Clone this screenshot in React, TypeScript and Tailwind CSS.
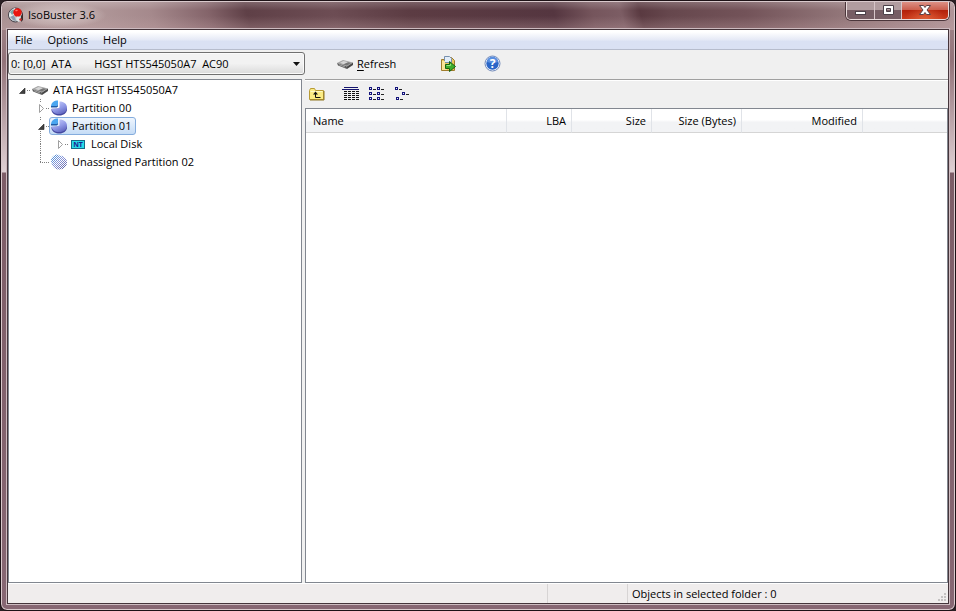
import { useState } from "react";
import type { ReactNode } from "react";

function AppLogo() {
  return (
    <svg width="16" height="16" viewBox="0 0 16 16" aria-hidden="true">
      <circle cx="7.5" cy="8" r="7" fill="#bfc6ca" stroke="#454149" />
      <path d="M7 1C3 2 1 5 1 9l3 4 3-4z" fill="#e8eeee" />
      <path d="M2 5l3-3 2 3-3 3z" fill="#7ea6a9" />
      <path d="M2 10l4-2 2 6-3-1z" fill="#8b9cae" />
      <circle cx="9.5" cy="5.5" r="4.2" fill="#ea150f" />
      <path d="M7 3.500l2-1 1 1-2 1z" fill="#ff796e" />
      <path d="M9 9.500l3 .5 1 4-3 1-2-3z" fill="#e4e8e8" />
      <path d="M13 9l2-3v7l-2 2z" fill="#3b2b2b" />
      <path d="M11 12l2-1 1 2-2 1z" fill="#c92f2b" />
    </svg>
  );
}

function DriveIcon() {
  return (
    <svg width="16" height="16" viewBox="0 0 16 16" aria-hidden="true">
      <path d="M0 7 6 4l10 2.500-6 4z" fill="#a6a6a6" />
      <path d="M3 6.800 6.500 5l5 1.200-4 2.200z" fill="#d6d6d6" />
      <path d="M0 7l10 3.500v2.500L1 9.500z" fill="#5e5e5e" />
      <path d="M10 10.500 16 6.500V9l-6 4z" fill="#484848" />
      <path d="M2 8.700l6 2.300" stroke="#b4b4b4" strokeWidth=".8" />
      <path d="M6 8.600l5-2.400 3 .7-4 2.700z" fill="#777" />
    </svg>
  );
}

function PieIcon() {
  return (
    <svg width="16" height="16" viewBox="0 0 16 16" aria-hidden="true">
      <defs>
        <linearGradient id="pie" x1=".2" y1="0" x2=".8" y2="1">
          <stop offset="0" stopColor="#c9d0fc" />
          <stop offset=".55" stopColor="#8f98e6" />
          <stop offset="1" stopColor="#5a5fba" />
        </linearGradient>
      </defs>
      <path d="M.500 9v1.500c.5 3 4 5 8 5s7-2.500 7.500-5.500V8z" fill="#4448a0" />
      <path d="M8.500 7.500V1.500c4.500 0 7.500 2.500 7.500 6.200s-3 6.300-7.700 6.300S1 12 .500 8.500h6z" fill="url(#pie)" />
      <path d="M0 6C.300 2.500 3 .500 7 .500V5L5.500 6z" fill="#4aa6f0" />
      <path d="M0 6h5.500L7 5v1.500L5.700 7.600H0z" fill="#1f5ca8" />
    </svg>
  );
}

function UnassignedIcon() {
  return (
    <svg width="16" height="16" viewBox="0 0 16 16" aria-hidden="true">
      <defs>
        <linearGradient id="fade" x1="0" y1="0" x2="1" y2="1">
          <stop offset="0" stopColor="#3f8fd8" />
          <stop offset=".5" stopColor="#8d97d8" />
          <stop offset="1" stopColor="#50549a" />
        </linearGradient>
        <pattern id="dither" width="2" height="2" patternUnits="userSpaceOnUse">
          <path d="M0 0h1v1H0zM1 1h1v1H1z" fill="#fff" />
        </pattern>
      </defs>
      <path d="M0 7C0 3 3 .500 7 .500L8.500 1.500C13 1.500 16 4.500 16 8.500s-3 7-7.500 7S1 13 0 7z" fill="url(#fade)" />
      <path d="M0 0h16v16H0z" fill="url(#dither)" />
    </svg>
  );
}

function NtIcon() {
  return (
    <svg width="16" height="16" viewBox="0 0 16 16" aria-hidden="true">
      <rect x="1.500" y="4.500" width="13" height="8" fill="#27dce9" stroke="#176a88" />
      <text x="8" y="11" textAnchor="middle" fontSize="7" fontWeight="700" fill="#1c2290">NT</text>
    </svg>
  );
}

function ExportIcon() {
  return (
    <svg width="16" height="16" viewBox="0 0 16 16" aria-hidden="true">
      <path d="M1.500 3.500h4l1-2h5l3 3v10h-13z" fill="#edc75c" stroke="#a07c2c" />
      <path d="M4.500.500h5l2 2v4h-7z" fill="#e3edf8" stroke="#7790ad" />
      <path d="M2 5h3v4l2 5H2z" fill="#fbe498" />
      <path d="M5.500 8.500h4V5.500l6 5-6 5v-3h-4z" fill="#3fae2c" stroke="#17610f" />
      <path d="M6.500 9.500h4V8" fill="none" stroke="#9ae681" />
    </svg>
  );
}

function HelpIcon() {
  return (
    <svg width="17" height="17" viewBox="0 0 17 17" aria-hidden="true">
      <circle cx="8.500" cy="8.500" r="7.500" fill="#f4f8ff" stroke="#7089b8" />
      <circle cx="8.500" cy="8.500" r="6.200" fill="#2965c7" />
      <path d="M3 7a5.500 5.500 0 0 1 11 0q-5 2-11 0z" fill="#5a8fe0" />
      <text x="8.500" y="13" textAnchor="middle" fontSize="12" fontWeight="700" fill="#fff">?</text>
    </svg>
  );
}

function FolderUpIcon() {
  return (
    <svg width="16" height="14" viewBox="0 0 16 14" aria-hidden="true">
      <path d="M.500 12.500v-9l1-2h4l1 2h8v9z" fill="#fbec84" stroke="#b89a34" />
      <path d="M1.500 4.500h12" stroke="#fffbc8" />
      <path d="M15 4v9H1" fill="none" stroke="#8f7622" />
      <path d="M6.500 5v5.500h5" fill="none" stroke="#111" />
      <path d="M6.500 4.500 4 7.500h5z" fill="#111" />
    </svg>
  );
}

function ReportViewIcon() {
  return (
    <svg width="17" height="15" viewBox="0 0 17 15" shapeRendering="crispEdges" aria-hidden="true">
      <path d="M0 2.500h17M2 .500h14" stroke="#14146e" />
      <path
        d="M2 4.500h15M2 6.500h15M2 8.500h15M2 10.500h15M2 12.500h15"
        stroke="#111"
        strokeDasharray="3 1"
      />
    </svg>
  );
}

function MiniItem({ x, y }: { x: number; y: number }) {
  return (
    <g fill="none">
      <rect x={x + 0.5} y={y + 0.5} width="2" height="2" stroke="#14147c" />
      <path d={`M${x + 4} ${y + 2.5}h3`} stroke="#222" />
    </g>
  );
}

function ListViewIcon() {
  return (
    <svg width="16" height="15" viewBox="0 0 16 15" shapeRendering="crispEdges" aria-hidden="true">
      {[0, 5, 10].map((y) => (
        <g key={y}>
          <MiniItem x={0} y={y} />
          <MiniItem x={8} y={y} />
        </g>
      ))}
    </svg>
  );
}

function SmallViewIcon() {
  return (
    <svg width="16" height="15" viewBox="0 0 16 15" shapeRendering="crispEdges" aria-hidden="true">
      <MiniItem x={0} y={0} />
      <MiniItem x={7} y={5} />
      <MiniItem x={1} y={10} />
    </svg>
  );
}

type Guide = "none" | "through" | "corner" | "open" | "closed" | "root" | "leaf";

function GuideCell({ kind }: { kind: Guide }) {
  const above = kind === "through" || kind === "corner" || kind === "open" || kind === "closed";
  const below = kind === "through" || kind === "open";
  return (
    <svg width="19" height="18" viewBox="0 0 19 18" shapeRendering="crispEdges" className="shrink-0" aria-hidden="true">
      <g stroke="#808080" strokeDasharray="1 1">
        {above && <path d={kind === "closed" || kind === "open" ? "M10.500 0v4" : "M10.500 0v9"} />}
        {below && <path d={kind === "open" ? "M10.500 14v4" : "M10.500 9v9"} />}
        {kind !== "through" && kind !== "none" && (
          <path d={kind === "corner" ? "M10 9.500h9" : "M16 9.500h3"} />
        )}
      </g>
      <g shapeRendering="geometricPrecision">
        {(kind === "open" || kind === "root") && (
          <path d="M14 7v5.500H8.500z" fill="#404040" stroke="#222" strokeWidth=".6" />
        )}
        {(kind === "closed" || kind === "leaf") && (
          <path d="M9.500 5.500v8l4-4z" fill="#fff" stroke="#a0a0a0" />
        )}
      </g>
    </svg>
  );
}

const nodes: { label: string; guides: Guide[]; icon: ReactNode }[] = [
  { label: "ATA HGST HTS545050A7", guides: ["root"], icon: <DriveIcon /> },
  { label: "Partition 00", guides: ["none", "closed"], icon: <PieIcon /> },
  { label: "Partition 01", guides: ["none", "open"], icon: <PieIcon /> },
  { label: "Local Disk", guides: ["none", "through", "leaf"], icon: <NtIcon /> },
  { label: "Unassigned Partition 02", guides: ["none", "corner"], icon: <UnassignedIcon /> },
];

function Tree() {
  const [selected, setSelected] = useState("Partition 01");
  return (
    <ul className="w-[294px] shrink-0 border border-[#828790] bg-white pt-px pl-0.5" aria-label="Devices">
      {nodes.map((node) => (
        <li key={node.label} className="flex h-[18px]">
          {node.guides.map((guide, i) => (
            <GuideCell key={i} kind={guide} />
          ))}
          <button
            onClick={() => setSelected(node.label)}
            className={
              "flex h-[18px] items-center gap-[5px] rounded-[3px] border pr-1 pl-px whitespace-nowrap " +
              (selected === node.label
                ? "border-[#84acdd] bg-linear-to-b from-[#eff6fe] to-[#c5dcf6]"
                : "border-transparent")
            }
          >
            {node.icon}
            <span>{node.label}</span>
          </button>
        </li>
      ))}
    </ul>
  );
}

function TitleBar() {
  return (
    <header className="flex h-[28px] shrink-0 items-start justify-between bg-[linear-gradient(to_bottom,#ffffff30,transparent_30%,transparent_50%,#c5a4a758),linear-gradient(75deg,#a79091_0%,#b29a9b_9%,#a5898c_16%,#84646a_22%,#5f4047_26%,#6d4d54_35%,#5c3c43_43%,#553640_58%,#75555c_62%,#7c5d64_65%,#5a3a41_67%,#66474d_70%,#735359_78%,#927679_88%,#b19699_100%)] pl-1.5">
      <div className="flex h-[26px] items-center gap-1 bg-[radial-gradient(ellipse_at_center,#ded0d0b3_10%,#d2c1c170_50%,transparent_70%)] pr-3">
        <AppLogo />
        <h1>IsoBuster 3.6</h1>
      </div>
      <div className="mr-[5px] flex h-[18px] rounded-b-[5px] border border-t-0 border-[#eadcdc] shadow-[0_0_0_1px_#4b363b]">
        <button aria-label="Minimize" className="flex w-7 items-center justify-center rounded-bl-[4px] border-r border-[#d8c6c9] bg-linear-to-b from-[#b19da0] from-50% to-[#765d64] to-50%">
          <svg width="13" height="13" viewBox="0 0 13 13" aria-hidden="true">
            <rect x="1.500" y="7.500" width="10" height="3" fill="#fff" stroke="#4c4149" />
          </svg>
        </button>
        <button aria-label="Maximize" className="flex w-[27px] items-center justify-center border-r border-[#d8c6c9] bg-linear-to-b from-[#b19da0] from-50% to-[#765d64] to-50%">
          <svg width="13" height="13" viewBox="0 0 13 13" aria-hidden="true">
            <path fillRule="evenodd" d="M1.500 1.500h10v9h-10zM4.500 4.500h4v3h-4z" fill="#fff" stroke="#4c4149" />
          </svg>
        </button>
        <button aria-label="Close" className="flex w-[46px] items-center justify-center rounded-br-[4px] bg-[radial-gradient(ellipse_at_bottom,#ef7b4e90,transparent_60%),linear-gradient(to_bottom,#dd9185,#c95c4b_48%,#b3210b_50%,#cb3b1d)]">
          <svg width="14" height="13" viewBox="0 0 14 13" aria-hidden="true">
            <path d="M1.500 1.500h4L7 3.500l1.500-2h4L9 6l3.500 4.500h-4L7 8.500l-1.500 2h-4L5 6z" fill="#fff" stroke="#5c4045" />
          </svg>
        </button>
      </div>
    </header>
  );
}

const columns = [
  { name: "Name", style: "w-[201px] text-left" },
  { name: "LBA", style: "w-[65px] text-right" },
  { name: "Size", style: "w-[80px] text-right" },
  { name: "Size (Bytes)", style: "w-[90px] text-right" },
  { name: "Modified", style: "w-[121px] text-right" },
];

function FileTable() {
  return (
    <div className="min-h-0 grow border border-[#828790] bg-white">
      <table className="w-full table-fixed border-separate border-spacing-0">
        <thead>
          <tr className="h-[24px] bg-linear-to-b from-white from-45% to-[#f2f3f5] to-55%">
            {columns.map((column) => (
              <th
                key={column.name}
                className={"border-r border-b border-r-[#e0e3e8] border-b-[#d5d5d5] pr-[5px] pl-[7px] font-normal whitespace-nowrap " + column.style}
              >
                {column.name}
              </th>
            ))}
            <td className="border-b border-[#d5d5d5]" />
          </tr>
        </thead>
        <tbody />
      </table>
    </div>
  );
}

export default function App() {
  return (
    <div className="h-screen bg-[#2a2024] font-['Open_Sans','Noto_Sans',sans-serif] text-[11px] leading-4 text-black">
      <div className="flex h-full flex-col rounded-[7px] border border-[#1d1216] bg-[linear-gradient(to_bottom,#a68c90_0px,#927379_60px,#b49ca1_110px,#dfd0d3_171px,#7d5d67_172px,#876773_100%)] shadow-[inset_0_0_0_1px_#d9c9cc]">
        <div className="m-px flex min-h-0 grow flex-col overflow-hidden rounded-[6px]">
          <TitleBar />
          <div className="mx-[5px] mb-[5px] -mt-px flex min-h-0 grow flex-col border border-[#45353b] bg-[#f0f0f0] shadow-[0_0_0_1px_#cdbbc0]">
            <nav className="flex h-5 shrink-0 items-center gap-[15px] border-b border-[#b6bccc] bg-linear-to-b from-white from-10% via-[#e6eaf6] via-50% to-[#dae1f3] to-60% px-[7px]">
              <button>File</button>
              <button>Options</button>
              <button>Help</button>
            </nav>
            <div className="flex h-[29px] shrink-0 items-start pt-0.5">
              <div className="grid w-[297px] shrink-0 items-center">
                <select aria-label="Drive" className="col-start-1 row-start-1 h-[23px] w-full appearance-none rounded-[3px] border border-[#707070] bg-linear-to-b from-[#f2f2f2] from-50% to-[#dadada] pl-0.5 whitespace-pre shadow-[inset_0_0_0_1px_#fafafa]">
                  <option>{"0: [0,0]\u00a0 ATA\u00a0\u00a0\u00a0\u00a0\u00a0\u00a0\u00a0 HGST HTS545050A7\u00a0 AC90"}</option>
                </select>
                <svg width="7" height="4" viewBox="0 0 7 4" className="pointer-events-none col-start-1 row-start-1 mr-[5px] justify-self-end" aria-hidden="true">
                  <path d="M0 0h7L3.500 4z" fill="#111" />
                </svg>
              </div>
              <div className="flex h-[23px] items-center gap-7 pl-8">
                <button className="mr-4 flex items-center gap-1">
                  <DriveIcon />
                  <span><u className="underline-offset-2">R</u>efresh</span>
                </button>
                <button aria-label="Export"><ExportIcon /></button>
                <button aria-label="Help contents"><HelpIcon /></button>
              </div>
            </div>
            <main className="flex min-h-0 grow gap-[3px]">
              <Tree />
              <section className="flex min-w-0 grow flex-col">
                <div className="flex h-[29px] shrink-0 items-center border-t border-[#a0a0a0] pl-1 shadow-[inset_0_1px_0_#fff]">
                  <button aria-label="Up one level" className="mr-[17px]"><FolderUpIcon /></button>
                  <div className="flex gap-2.5">
                    <button aria-label="Details"><ReportViewIcon /></button>
                    <button aria-label="List"><ListViewIcon /></button>
                    <button aria-label="Small icons"><SmallViewIcon /></button>
                  </div>
                </div>
                <FileTable />
              </section>
            </main>
            <footer className="flex h-5 shrink-0 items-stretch border-t border-white bg-[#f0eded] leading-[19px]">
              <div className="grow" />
              <div className="w-20 border-l border-[#d7d4d4]" />
              <div className="flex w-[321px] justify-between border-l border-[#d7d4d4] pl-1">
                <span>Objects in selected folder : 0</span>
                <svg width="10" height="10" viewBox="0 0 10 10" className="self-end" fill="#c4c1c1" aria-hidden="true">
                  <path d="M6 0h2v2H6zM3 3h2v2H3zM6 3h2v2H6zM0 6h2v2H0zM3 6h2v2H3zM6 6h2v2H6z" />
                </svg>
              </div>
            </footer>
          </div>
        </div>
      </div>
    </div>
  );
}
